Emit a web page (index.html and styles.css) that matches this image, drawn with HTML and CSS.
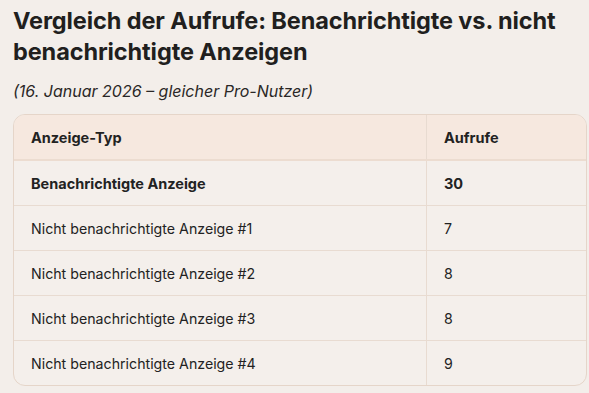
FILE: index.html
```html
<!DOCTYPE html>
<html lang="de">
<head>
<meta charset="utf-8">
<link rel="stylesheet" href="styles.css">
</head>
<body>
<h1 class="title">Vergleich der Aufrufe: Benachrichtigte vs. nicht benachrichtigte Anzeigen</h1>
<p class="subtitle">(16. Januar 2026 – gleicher Pro-Nutzer)</p>
<div class="table-wrap">
<table class="data">
<thead>
<tr><th>Anzeige-Typ</th><th>Aufrufe</th></tr>
</thead>
<tbody>
<tr class="strong"><td>Benachrichtigte Anzeige</td><td>30</td></tr>
<tr><td>Nicht benachrichtigte Anzeige #1</td><td>7</td></tr>
<tr><td>Nicht benachrichtigte Anzeige #2</td><td>8</td></tr>
<tr><td>Nicht benachrichtigte Anzeige #3</td><td>8</td></tr>
<tr><td>Nicht benachrichtigte Anzeige #4</td><td>9</td></tr>
</tbody>
</table>
</div>
</body>
</html>
```
FILE: styles.css
```css
html, body {
  margin: 0;
  padding: 0;
}
body {
  background: #f3eeea;
  color: #222;
  font-family: Inter, "Noto Sans", sans-serif;
  padding: 5px 4px 0 13px;
}
.title {
  font-size: 23.5px;
  font-weight: 700;
  line-height: 31px;
  margin: 0;
  color: #211f1e;
  letter-spacing: -0.1px;
}
.subtitle {
  font-style: italic;
  font-size: 16px;
  margin: 14px 0 0;
  line-height: 20px;
  color: #2a2726;
}
.table-wrap {
  margin-top: 13px;
  width: 572px;
  border: 1px solid #e5d5c9;
  border-radius: 12px;
  overflow: hidden;
  background: #f4efeb;
}
.data {
  width: 100%;
  border-collapse: collapse;
}
.data th, .data td {
  text-align: left;
  padding: 0 17px;
  height: 44px;
  font-size: 14.2px;
  border-bottom: 1px solid #e8dbd1;
}
.data th {
  background: #f6e8df;
  font-weight: 700;
  font-size: 14.5px;
  border-bottom: 2px solid #ecdcd0;
}
.data th:first-child, .data td:first-child {
  width: 378px;
  border-right: 1px solid #e8dbd1;
}
.data tbody tr:last-child td {
  border-bottom: none;
}
.data .strong td {
  font-weight: 700;
  font-size: 14.5px;
}
```
